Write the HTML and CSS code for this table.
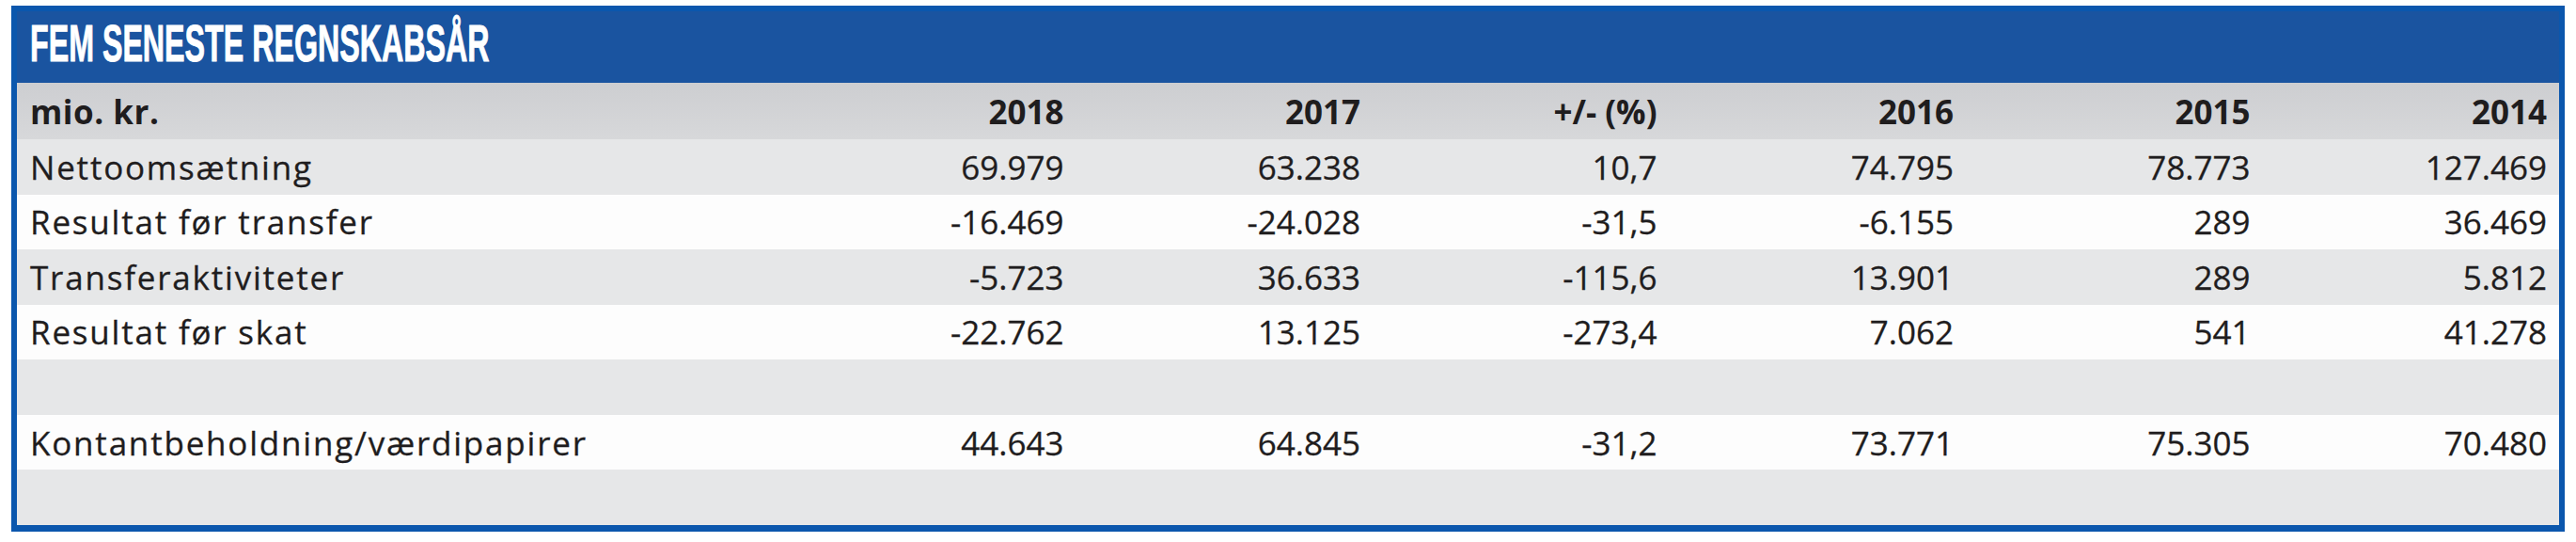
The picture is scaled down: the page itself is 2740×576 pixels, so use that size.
FILE: index.html
```html
<!DOCTYPE html>
<html lang="da">
<head>
<meta charset="utf-8">
<title>Fem seneste regnskabsår</title>
<link rel="stylesheet" href="styles.css">
</head>
<body>
<section class="panel">
  <header class="title"><h2>FEM SENESTE REGNSKABSÅR</h2></header>
  <div class="table">
    <div class="row head">
      <div class="label">mio. kr.</div>
      <div class="num">2018</div>
      <div class="num">2017</div>
      <div class="num">+/- (%)</div>
      <div class="num">2016</div>
      <div class="num">2015</div>
      <div class="num">2014</div>
    </div>
    <div class="row shade">
      <div class="label">Nettoomsætning</div>
      <div class="num">69.979</div>
      <div class="num">63.238</div>
      <div class="num">10,7</div>
      <div class="num">74.795</div>
      <div class="num">78.773</div>
      <div class="num">127.469</div>
    </div>
    <div class="row plain">
      <div class="label">Resultat før transfer</div>
      <div class="num">-16.469</div>
      <div class="num">-24.028</div>
      <div class="num">-31,5</div>
      <div class="num">-6.155</div>
      <div class="num">289</div>
      <div class="num">36.469</div>
    </div>
    <div class="row shade">
      <div class="label">Transferaktiviteter</div>
      <div class="num">-5.723</div>
      <div class="num">36.633</div>
      <div class="num">-115,6</div>
      <div class="num">13.901</div>
      <div class="num">289</div>
      <div class="num">5.812</div>
    </div>
    <div class="row plain">
      <div class="label">Resultat før skat</div>
      <div class="num">-22.762</div>
      <div class="num">13.125</div>
      <div class="num">-273,4</div>
      <div class="num">7.062</div>
      <div class="num">541</div>
      <div class="num">41.278</div>
    </div>
    <div class="row shade"></div>
    <div class="row plain">
      <div class="label">Kontantbeholdning/værdipapirer</div>
      <div class="num">44.643</div>
      <div class="num">64.845</div>
      <div class="num">-31,2</div>
      <div class="num">73.771</div>
      <div class="num">75.305</div>
      <div class="num">70.480</div>
    </div>
    <div class="row shade"></div>
  </div>
</section>
</body>
</html>
```
FILE: styles.css
```css
html, body {
  margin: 0;
  padding: 0;
  background: #ffffff;
}

.panel {
  margin: 6px 0 0 12px;
  width: 2716px;
  height: 559px;
  box-sizing: border-box;
  border: 6px solid #0b57ad;
  border-bottom-width: 7px;
  background: #e6e7e8;
  font-family: "Open Sans", "Liberation Sans", sans-serif;
  color: #1f1d1e;
}

.title {
  height: 76px;
  box-sizing: border-box;
  padding: 6px 0 0 14px;
  background: #1a54a0;
  overflow: hidden;
}

.title h2 {
  display: inline-block;
  margin: 0;
  font-family: "Liberation Sans", Arial, sans-serif;
  font-weight: 700;
  font-size: 56px;
  line-height: 1;
  color: #ffffff;
  white-space: nowrap;
  -webkit-text-stroke: 1px #ffffff;
  transform: scaleX(0.575);
  transform-origin: 0 0;
}

.row {
  display: grid;
  grid-template-columns: 1fr repeat(6, 315.5px);
  align-items: center;
  height: 58.57px;
  font-size: 35px;
  -webkit-text-stroke: 0.3px #1f1d1e;
}

.row.head {
  height: 60px;
  font-weight: 700;
  background: linear-gradient(#cdced1, #d7d8da);
  -webkit-text-stroke: 0;
}

.row.shade {
  background: #e6e7e8;
}

.row.plain {
  background: #fdfdfd;
}

.label {
  padding-left: 14px;
  letter-spacing: 1.8px;
  white-space: nowrap;
}

.head .label {
  letter-spacing: 0.5px;
}

.num {
  padding-right: 13px;
  text-align: right;
  white-space: nowrap;
}
```
